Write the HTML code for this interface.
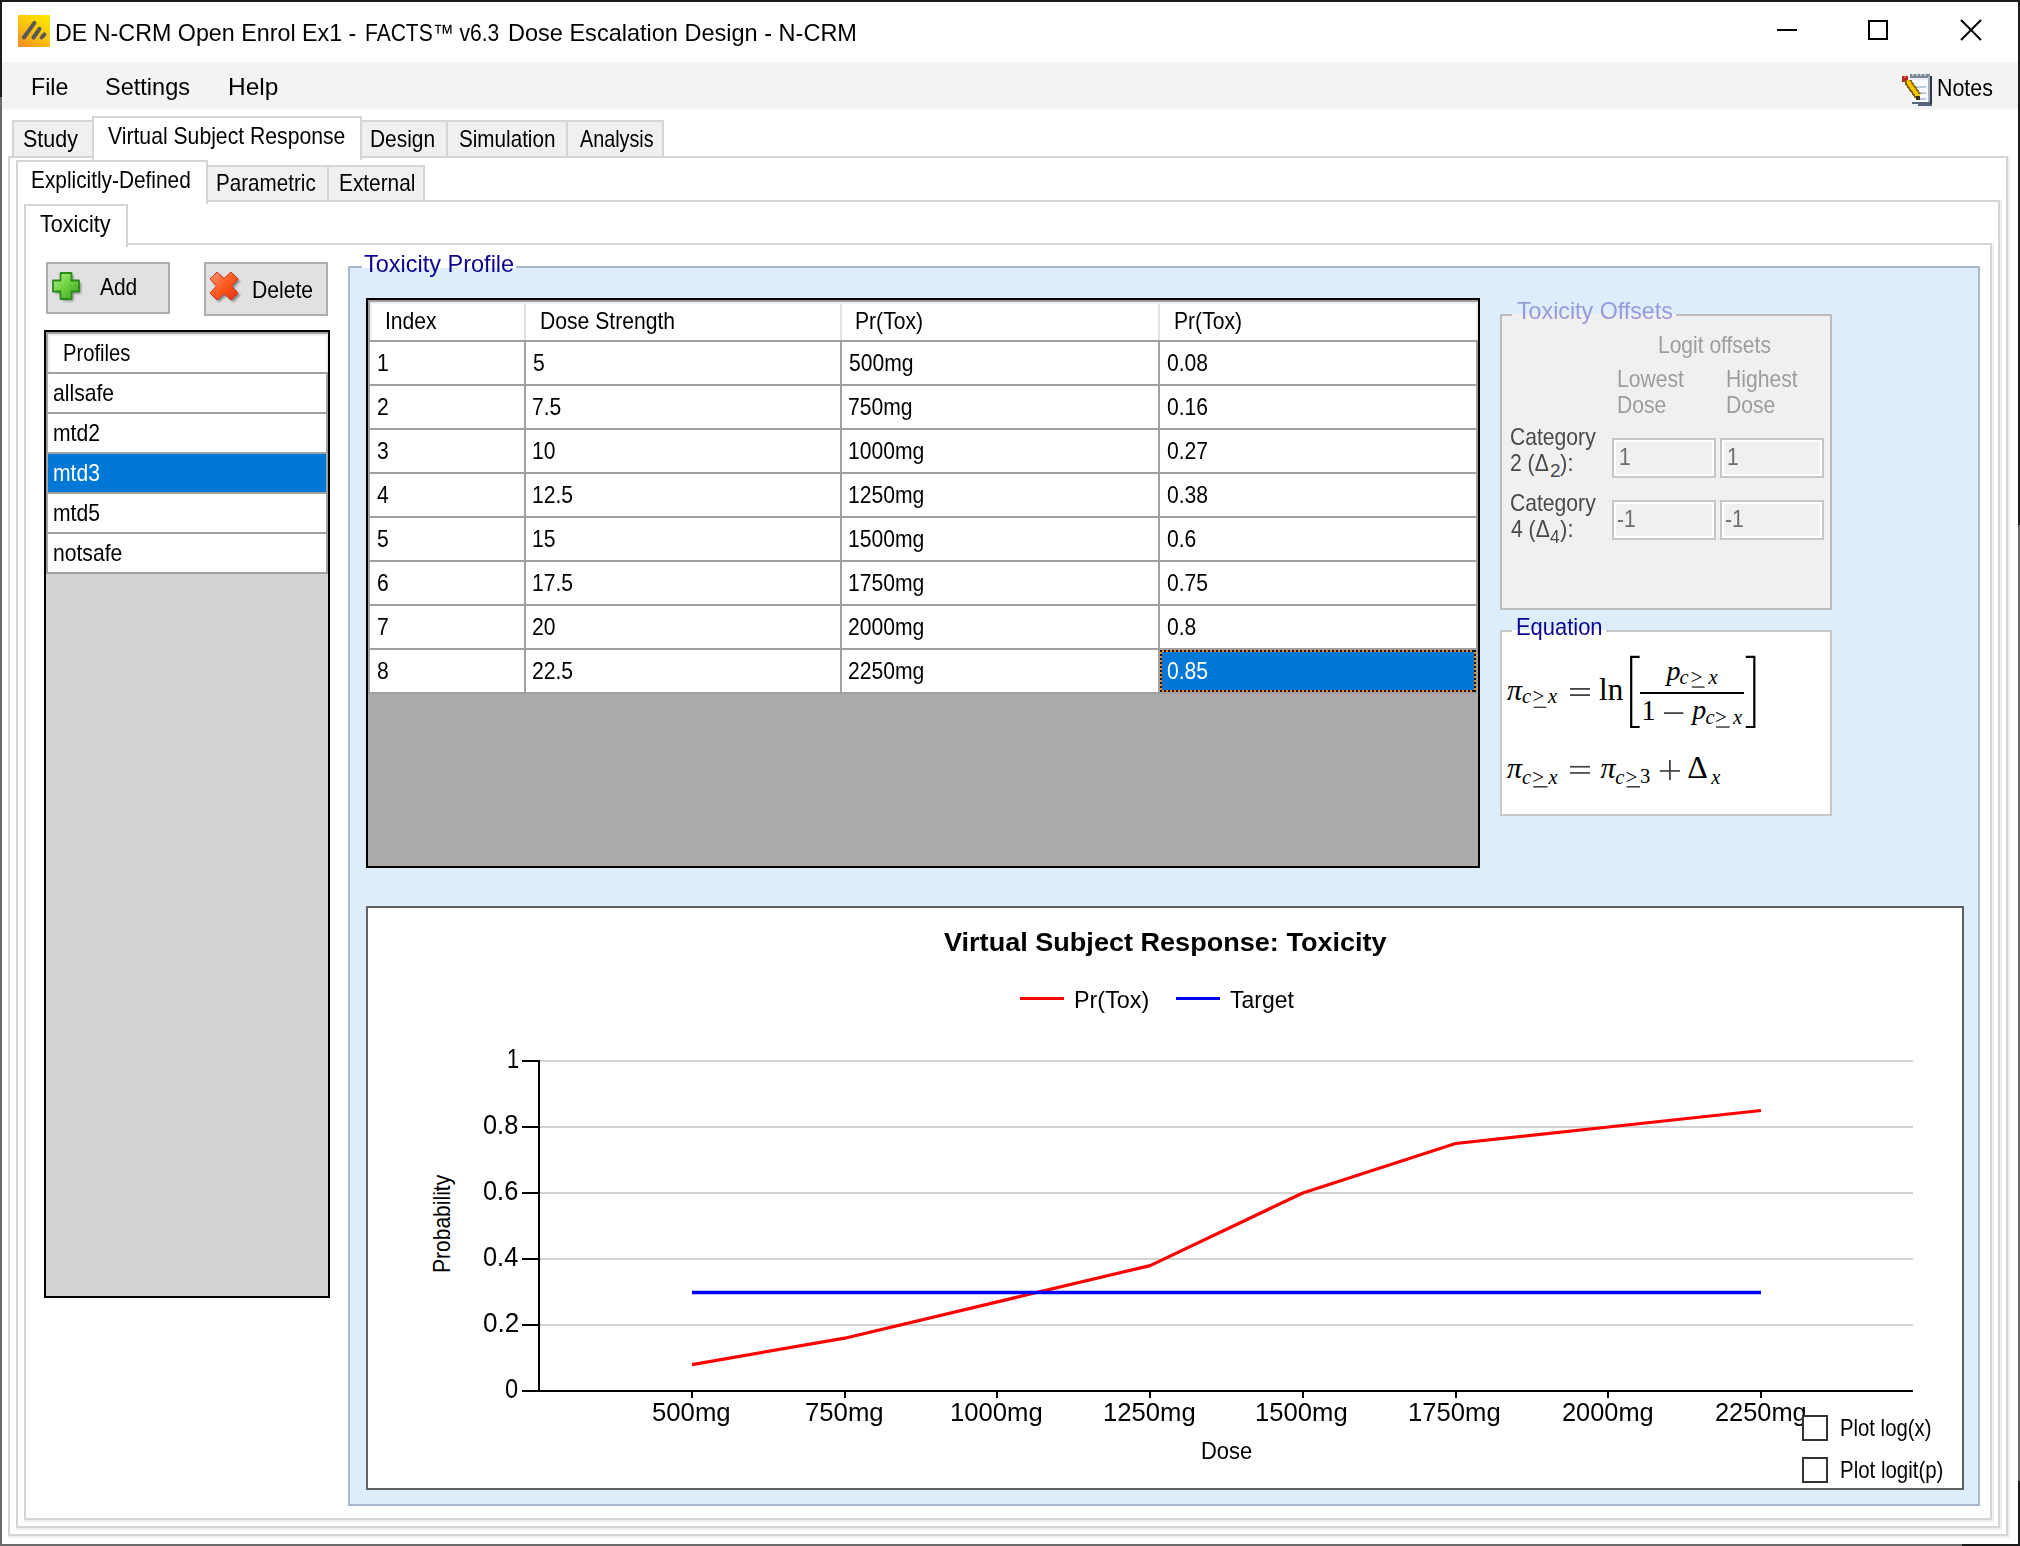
<!DOCTYPE html>
<html><head><meta charset="utf-8"><style>
html,body{margin:0;padding:0;}
body{width:2020px;height:1546px;position:relative;overflow:hidden;background:#fff;font-family:"Liberation Sans",sans-serif;}
.a{position:absolute;}
.t{position:absolute;white-space:nowrap;line-height:1;transform-origin:0 0;}
svg{position:absolute;}
</style></head><body>
<div class="a" style="left:0px;top:0px;width:2020px;height:62px;background:#ffffff;"></div>
<div class="a" style="left:2px;top:62px;width:2016px;height:47px;background:#f3f3f3;"></div>
<div class="a" style="left:2px;top:109px;width:2016px;height:1px;background:#f7f9fc;"></div>
<svg style="left:18px;top:15px" width="32" height="32" viewBox="0 0 32 32">
<defs><linearGradient id="ig" x1="0.85" y1="0" x2="0.15" y2="1"><stop offset="0" stop-color="#ffe800"/><stop offset="0.55" stop-color="#f9c010"/><stop offset="1" stop-color="#f39020"/></linearGradient>
<filter id="ib" x="-30%" y="-30%" width="160%" height="160%"><feGaussianBlur stdDeviation="0.6"/></filter></defs>
<rect x="0" y="0" width="32" height="32" fill="url(#ig)"/>
<g stroke="#585858" stroke-width="4.0" stroke-linecap="round" fill="none" filter="url(#ib)">
<line x1="5.9" y1="22.5" x2="16.4" y2="7.8"/><line x1="15.5" y1="22.5" x2="21.5" y2="13.9"/><line x1="23.6" y1="22.5" x2="26.4" y2="19.4"/>
</g></svg>
<span class="t" style="left:55.03px;top:20.68px;font-size:24px;color:#000;transform:scaleX(0.9697);">DE N-CRM Open Enrol Ex1 -</span>
<span class="t" style="left:365.12px;top:20.68px;font-size:24px;color:#000;transform:scaleX(0.8755);">FACTS™ v6.3</span>
<span class="t" style="left:507.52px;top:20.68px;font-size:24px;color:#000;transform:scaleX(0.9799);">Dose Escalation Design - N-CRM</span>
<div class="a" style="left:1777px;top:29px;width:20px;height:2px;background:#000;"></div>
<div class="a" style="left:1868px;top:20px;width:20px;height:20px;box-sizing:border-box;border-top:2px solid #000;border-left:2px solid #000;border-right:2px solid #000;border-bottom:2px solid #000;"></div>
<svg style="left:1960px;top:19px" width="22" height="22" viewBox="0 0 22 22"><g stroke="#000" stroke-width="2"><line x1="1" y1="1" x2="21" y2="21"/><line x1="21" y1="1" x2="1" y2="21"/></g></svg>
<span class="t" style="left:31.04px;top:75.18px;font-size:24px;color:#000;transform:scaleX(0.9645);">File</span>
<span class="t" style="left:105.02px;top:75.18px;font-size:24px;color:#000;transform:scaleX(0.9799);">Settings</span>
<span class="t" style="left:227.98px;top:75.18px;font-size:24px;color:#000;transform:scaleX(1.0206);">Help</span>
<svg style="left:1900px;top:72px" width="36" height="36" viewBox="0 0 36 36" shape-rendering="crispEdges">
<rect x="10" y="4" width="20" height="30" fill="#eef2f8"/>
<rect x="12" y="8" width="16" height="24" fill="#f8fafd"/>
<rect x="10" y="2" width="20" height="4" fill="#7d8794"/>
<rect x="12" y="2" width="2" height="2" fill="#b8c0c8"/><rect x="16" y="2" width="2" height="2" fill="#b8c0c8"/><rect x="20" y="2" width="2" height="2" fill="#b8c0c8"/><rect x="24" y="2" width="2" height="2" fill="#b8c0c8"/>
<rect x="28" y="4" width="2" height="30" fill="#a9b2bc"/>
<rect x="30" y="4" width="2" height="30" fill="#2c3a48"/>
<rect x="12" y="30" width="18" height="2" fill="#53667a"/>
<rect x="18" y="32" width="14" height="2" fill="#53667a"/>
<g fill="#b9c9e0"><rect x="16" y="14" width="10" height="2"/><rect x="16" y="20" width="10" height="2"/><rect x="16" y="26" width="10" height="2"/></g>
<path d="M2 4 h6 v6 h-6 z" fill="#b02a20"/><rect x="4" y="4" width="2" height="2" fill="#ff5a48"/>
<path d="M6 8 L10 8 L20 22 L20 26 L16 26 L6 12 Z" fill="#f4c800"/>
<path d="M6 8 L6 12 L16 26" fill="none" stroke="#8a6400" stroke-width="2"/>
<path d="M10 8 L20 22" fill="none" stroke="#9a7000" stroke-width="2"/>
<path d="M16 24 h4 v4 h-4 z" fill="#3a3020"/>
</svg>
<span class="t" style="left:1937.11px;top:75.68px;font-size:24px;color:#000;transform:scaleX(0.8915);">Notes</span>
<div class="a" style="left:0px;top:0px;width:2020px;height:2px;background:#1b1b1b;"></div>
<div class="a" style="left:0px;top:0px;width:2px;height:97px;background:#1b1b1b;"></div>
<div class="a" style="left:0px;top:97px;width:2px;height:1449px;background:#6a6a6a;"></div>
<div class="a" style="left:2018px;top:0px;width:2px;height:525px;background:#1b1b1b;"></div>
<div class="a" style="left:2018px;top:525px;width:2px;height:956px;background:#6a6a6a;"></div>
<div class="a" style="left:2018px;top:1481px;width:2px;height:65px;background:#1b1b1b;"></div>
<div class="a" style="left:0px;top:1544px;width:1962px;height:2px;background:#6a6a6a;"></div>
<div class="a" style="left:1962px;top:1544px;width:58px;height:2px;background:#1b1b1b;"></div>
<div class="a" style="left:8px;top:156px;width:2000px;height:1380px;box-sizing:border-box;border-top:2px solid #d5d5d5;border-left:2px solid #d5d5d5;border-right:2px solid #d5d5d5;border-bottom:2px solid #d5d5d5;"></div>
<div class="a" style="left:2008px;top:156px;width:2px;height:1382px;background:#efefef;"></div>
<div class="a" style="left:8px;top:1536px;width:2002px;height:2px;background:#efefef;"></div>
<div class="a" style="left:12px;top:120px;width:82px;height:36px;box-sizing:border-box;border-top:2px solid #d5d5d5;border-left:2px solid #d5d5d5;border-right:2px solid #d5d5d5;background:#f0f0f0;"></div>
<div class="a" style="left:446px;top:120px;width:122px;height:36px;box-sizing:border-box;border-top:2px solid #d5d5d5;border-left:2px solid #d5d5d5;border-right:2px solid #d5d5d5;background:#f0f0f0;"></div>
<div class="a" style="left:566px;top:120px;width:98px;height:36px;box-sizing:border-box;border-top:2px solid #d5d5d5;border-left:2px solid #d5d5d5;border-right:2px solid #d5d5d5;background:#f0f0f0;"></div>
<div class="a" style="left:360px;top:120px;width:88px;height:36px;box-sizing:border-box;border-top:2px solid #d5d5d5;border-left:2px solid #d5d5d5;border-right:2px solid #d5d5d5;background:#f0f0f0;"></div>
<div class="a" style="left:92px;top:116px;width:270px;height:44px;box-sizing:border-box;border-top:2px solid #d5d5d5;border-left:2px solid #d5d5d5;border-right:2px solid #d5d5d5;background:#ffffff;"></div>
<span class="t" style="left:23.11px;top:127.38px;font-size:24px;color:#000;transform:scaleX(0.8945);">Study</span>
<span class="t" style="left:108.00px;top:123.68px;font-size:24px;color:#000;transform:scaleX(0.8820);">Virtual Subject Response</span>
<span class="t" style="left:370.13px;top:127.18px;font-size:24px;color:#000;transform:scaleX(0.8707);">Design</span>
<span class="t" style="left:459.14px;top:127.18px;font-size:24px;color:#000;transform:scaleX(0.8605);">Simulation</span>
<span class="t" style="left:580.40px;top:127.18px;font-size:24px;color:#000;transform:scaleX(0.8236);">Analysis</span>
<div class="a" style="left:16px;top:200px;width:1984px;height:1328px;box-sizing:border-box;border-top:2px solid #d5d5d5;border-left:2px solid #d5d5d5;border-right:2px solid #d5d5d5;border-bottom:2px solid #d5d5d5;"></div>
<div class="a" style="left:2000px;top:200px;width:2px;height:1330px;background:#efefef;"></div>
<div class="a" style="left:16px;top:1528px;width:1986px;height:2px;background:#efefef;"></div>
<div class="a" style="left:206px;top:165px;width:123px;height:35px;box-sizing:border-box;border-top:2px solid #d5d5d5;border-left:2px solid #d5d5d5;border-right:2px solid #d5d5d5;background:#f0f0f0;"></div>
<div class="a" style="left:327px;top:165px;width:98px;height:35px;box-sizing:border-box;border-top:2px solid #d5d5d5;border-left:2px solid #d5d5d5;border-right:2px solid #d5d5d5;background:#f0f0f0;"></div>
<div class="a" style="left:16px;top:160px;width:192px;height:44px;box-sizing:border-box;border-top:2px solid #d5d5d5;border-left:2px solid #d5d5d5;border-right:2px solid #d5d5d5;background:#ffffff;"></div>
<span class="t" style="left:31.43px;top:167.68px;font-size:24px;color:#000;transform:scaleX(0.8678);">Explicitly-Defined</span>
<span class="t" style="left:215.64px;top:171.18px;font-size:24px;color:#000;transform:scaleX(0.8598);">Parametric</span>
<span class="t" style="left:339.13px;top:171.18px;font-size:24px;color:#000;transform:scaleX(0.8680);">External</span>
<div class="a" style="left:24px;top:243px;width:1968px;height:1277px;box-sizing:border-box;border-top:2px solid #d5d5d5;border-left:2px solid #d5d5d5;border-right:2px solid #d5d5d5;border-bottom:2px solid #d5d5d5;"></div>
<div class="a" style="left:1992px;top:243px;width:2px;height:1279px;background:#efefef;"></div>
<div class="a" style="left:24px;top:1520px;width:1970px;height:2px;background:#efefef;"></div>
<div class="a" style="left:24px;top:204px;width:104px;height:43px;box-sizing:border-box;border-top:2px solid #d5d5d5;border-left:2px solid #d5d5d5;border-right:2px solid #d5d5d5;background:#ffffff;"></div>
<span class="t" style="left:40.40px;top:211.68px;font-size:24px;color:#000;transform:scaleX(0.8973);">Toxicity</span>
<div class="a" style="left:46px;top:262px;width:124px;height:52px;box-sizing:border-box;border-top:2px solid #adadad;border-left:2px solid #adadad;border-right:2px solid #adadad;border-bottom:2px solid #adadad;background:#e1e1e1;"></div>
<div class="a" style="left:204px;top:262px;width:124px;height:54px;box-sizing:border-box;border-top:2px solid #adadad;border-left:2px solid #adadad;border-right:2px solid #adadad;border-bottom:2px solid #adadad;background:#e1e1e1;"></div>
<svg style="left:50px;top:270px" width="36" height="36" viewBox="0 0 36 36">
<path d="M10.5 3 h11 v7.5 h7.5 v11 h-7.5 v7.5 h-11 v-7.5 h-7.5 v-11 h7.5 z" transform="translate(2.2,2.2)" fill="#000" opacity="0.35" filter="url(#bl)"/>
<defs><filter id="bl" x="-20%" y="-20%" width="140%" height="140%"><feGaussianBlur stdDeviation="1.2"/></filter>
<linearGradient id="gg" x1="0" y1="0" x2="1" y2="1"><stop offset="0" stop-color="#b8f090"/><stop offset="0.5" stop-color="#6cd040"/><stop offset="1" stop-color="#3aa020"/></linearGradient></defs>
<path d="M10.5 3 h11 v7.5 h7.5 v11 h-7.5 v7.5 h-11 v-7.5 h-7.5 v-11 h7.5 z" fill="url(#gg)" stroke="#2a8a1a" stroke-width="1.8" stroke-linejoin="round"/>
</svg>
<svg style="left:206px;top:268px" width="40" height="40" viewBox="0 0 40 40">
<defs><filter id="bl2" x="-20%" y="-20%" width="140%" height="140%"><feGaussianBlur stdDeviation="1.3"/></filter>
<linearGradient id="rg" x1="0" y1="0" x2="1" y2="1"><stop offset="0" stop-color="#ff9a70"/><stop offset="0.5" stop-color="#ff5a20"/><stop offset="1" stop-color="#e83010"/></linearGradient></defs>
<path d="M4 11 L11 4 L18 10.5 L25 4 L32 11 L25.5 18 L32 25 L25 32 L18 25.5 L11 32 L4 25 L10.5 18 Z" transform="translate(2.2,2.2)" fill="#000" opacity="0.4" filter="url(#bl2)"/>
<path d="M4 11 L11 4 L18 10.5 L25 4 L32 11 L25.5 18 L32 25 L25 32 L18 25.5 L11 32 L4 25 L10.5 18 Z" fill="url(#rg)" stroke="#d03010" stroke-width="1" stroke-linejoin="round"/>
</svg>
<span class="t" style="left:99.80px;top:275.38px;font-size:24px;color:#000;transform:scaleX(0.8729);">Add</span>
<span class="t" style="left:251.62px;top:277.68px;font-size:24px;color:#000;transform:scaleX(0.8805);">Delete</span>
<div class="a" style="left:44px;top:330px;width:286px;height:968px;box-sizing:border-box;border-top:2px solid #000;border-left:2px solid #000;border-right:2px solid #000;border-bottom:2px solid #000;background:#d3d3d3;"></div>
<div class="a" style="left:46px;top:332px;width:282px;height:40px;background:#ffffff;"></div>
<div class="a" style="left:46px;top:332px;width:282px;height:2px;background:#a0a0a0;"></div>
<div class="a" style="left:46px;top:332px;width:2px;height:42px;background:#a0a0a0;"></div>
<div class="a" style="left:48px;top:334px;width:278px;height:2px;background:#f0f0f0;"></div>
<div class="a" style="left:48px;top:334px;width:2px;height:38px;background:#f0f0f0;"></div>
<div class="a" style="left:326px;top:334px;width:2px;height:38px;background:#ececec;"></div>
<div class="a" style="left:46px;top:372px;width:282px;height:2px;background:#a0a0a0;"></div>
<span class="t" style="left:63.16px;top:341.38px;font-size:24px;color:#000;transform:scaleX(0.8415);">Profiles</span>
<div class="a" style="left:46px;top:374px;width:282px;height:38px;background:#ffffff;"></div>
<div class="a" style="left:46px;top:374px;width:2px;height:40px;background:#a0a0a0;"></div>
<div class="a" style="left:326px;top:374px;width:2px;height:40px;background:#a0a0a0;"></div>
<div class="a" style="left:46px;top:412px;width:282px;height:2px;background:#a0a0a0;"></div>
<span class="t" style="left:52.62px;top:381.18px;font-size:24px;color:#000;transform:scaleX(0.8800);">allsafe</span>
<div class="a" style="left:46px;top:414px;width:282px;height:38px;background:#ffffff;"></div>
<div class="a" style="left:46px;top:414px;width:2px;height:40px;background:#a0a0a0;"></div>
<div class="a" style="left:326px;top:414px;width:2px;height:40px;background:#a0a0a0;"></div>
<div class="a" style="left:46px;top:452px;width:282px;height:2px;background:#a0a0a0;"></div>
<span class="t" style="left:52.62px;top:421.18px;font-size:24px;color:#000;transform:scaleX(0.8800);">mtd2</span>
<div class="a" style="left:46px;top:454px;width:282px;height:38px;background:#0078d7;"></div>
<div class="a" style="left:46px;top:454px;width:2px;height:40px;background:#a0a0a0;"></div>
<div class="a" style="left:326px;top:454px;width:2px;height:40px;background:#a0a0a0;"></div>
<div class="a" style="left:46px;top:492px;width:282px;height:2px;background:#a0a0a0;"></div>
<span class="t" style="left:52.62px;top:461.18px;font-size:24px;color:#fff;transform:scaleX(0.8800);">mtd3</span>
<div class="a" style="left:46px;top:494px;width:282px;height:38px;background:#ffffff;"></div>
<div class="a" style="left:46px;top:494px;width:2px;height:40px;background:#a0a0a0;"></div>
<div class="a" style="left:326px;top:494px;width:2px;height:40px;background:#a0a0a0;"></div>
<div class="a" style="left:46px;top:532px;width:282px;height:2px;background:#a0a0a0;"></div>
<span class="t" style="left:52.62px;top:501.18px;font-size:24px;color:#000;transform:scaleX(0.8800);">mtd5</span>
<div class="a" style="left:46px;top:534px;width:282px;height:38px;background:#ffffff;"></div>
<div class="a" style="left:46px;top:534px;width:2px;height:40px;background:#a0a0a0;"></div>
<div class="a" style="left:326px;top:534px;width:2px;height:40px;background:#a0a0a0;"></div>
<div class="a" style="left:46px;top:572px;width:282px;height:2px;background:#a0a0a0;"></div>
<span class="t" style="left:52.62px;top:541.18px;font-size:24px;color:#000;transform:scaleX(0.8800);">notsafe</span>
<div class="a" style="left:348px;top:266px;width:1632px;height:1240px;box-sizing:border-box;border-top:2px solid #a9b9cb;border-left:2px solid #a9b9cb;border-right:2px solid #a9b9cb;border-bottom:2px solid #a9b9cb;background:#deedfc;"></div>
<div class="a" style="left:362px;top:262px;width:154px;height:6px;background:#ffffff;"></div>
<div class="a" style="left:362px;top:268px;width:154px;height:2px;background:#deedfc;"></div>
<span class="t" style="left:364.00px;top:251.68px;font-size:24px;color:#0d0590;transform:scaleX(0.9789);">Toxicity Profile</span>
<div class="a" style="left:366px;top:298px;width:1114px;height:570px;box-sizing:border-box;border-top:2px solid #000;border-left:2px solid #000;border-right:2px solid #000;border-bottom:2px solid #000;background:#ababab;"></div>
<div class="a" style="left:368px;top:300px;width:1110px;height:42px;background:#ffffff;"></div>
<div class="a" style="left:368px;top:300px;width:1110px;height:2px;background:#a0a0a0;"></div>
<div class="a" style="left:368px;top:300px;width:2px;height:394px;background:#a0a0a0;"></div>
<div class="a" style="left:370px;top:302px;width:1106px;height:2px;background:#f0f0f0;"></div>
<div class="a" style="left:370px;top:302px;width:2px;height:38px;background:#f0f0f0;"></div>
<div class="a" style="left:1476px;top:302px;width:2px;height:38px;background:#ececec;"></div>
<div class="a" style="left:368px;top:340px;width:1110px;height:2px;background:#a0a0a0;"></div>
<div class="a" style="left:524px;top:304px;width:2px;height:36px;background:#e3e3e3;"></div>
<div class="a" style="left:840px;top:304px;width:2px;height:36px;background:#e3e3e3;"></div>
<div class="a" style="left:1158px;top:304px;width:2px;height:36px;background:#e3e3e3;"></div>
<span class="t" style="left:384.94px;top:308.78px;font-size:24px;color:#000;transform:scaleX(0.8800);">Index</span>
<span class="t" style="left:539.62px;top:308.78px;font-size:24px;color:#000;transform:scaleX(0.8800);">Dose Strength</span>
<span class="t" style="left:855.42px;top:308.78px;font-size:24px;color:#000;transform:scaleX(0.8800);">Pr(Tox)</span>
<span class="t" style="left:1173.52px;top:308.78px;font-size:24px;color:#000;transform:scaleX(0.8800);">Pr(Tox)</span>
<div class="a" style="left:370px;top:342px;width:1108px;height:44px;background:#ffffff;"></div>
<div class="a" style="left:370px;top:384px;width:1108px;height:2px;background:#a0a0a0;"></div>
<div class="a" style="left:524px;top:342px;width:2px;height:44px;background:#a0a0a0;"></div>
<div class="a" style="left:840px;top:342px;width:2px;height:44px;background:#a0a0a0;"></div>
<div class="a" style="left:1158px;top:342px;width:2px;height:44px;background:#a0a0a0;"></div>
<div class="a" style="left:1476px;top:342px;width:2px;height:44px;background:#a0a0a0;"></div>
<span class="t" style="left:376.52px;top:351.18px;font-size:24px;color:#000;transform:scaleX(0.8800);">1</span>
<span class="t" style="left:532.50px;top:351.18px;font-size:24px;color:#000;transform:scaleX(0.8800);">5</span>
<span class="t" style="left:848.60px;top:351.18px;font-size:24px;color:#000;transform:scaleX(0.8800);">500mg</span>
<span class="t" style="left:1166.70px;top:351.18px;font-size:24px;color:#000;transform:scaleX(0.8800);">0.08</span>
<div class="a" style="left:370px;top:386px;width:1108px;height:44px;background:#ffffff;"></div>
<div class="a" style="left:370px;top:428px;width:1108px;height:2px;background:#a0a0a0;"></div>
<div class="a" style="left:524px;top:386px;width:2px;height:44px;background:#a0a0a0;"></div>
<div class="a" style="left:840px;top:386px;width:2px;height:44px;background:#a0a0a0;"></div>
<div class="a" style="left:1158px;top:386px;width:2px;height:44px;background:#a0a0a0;"></div>
<div class="a" style="left:1476px;top:386px;width:2px;height:44px;background:#a0a0a0;"></div>
<span class="t" style="left:376.52px;top:395.18px;font-size:24px;color:#000;transform:scaleX(0.8800);">2</span>
<span class="t" style="left:531.62px;top:395.18px;font-size:24px;color:#000;transform:scaleX(0.8800);">7.5</span>
<span class="t" style="left:847.72px;top:395.18px;font-size:24px;color:#000;transform:scaleX(0.8800);">750mg</span>
<span class="t" style="left:1166.70px;top:395.18px;font-size:24px;color:#000;transform:scaleX(0.8800);">0.16</span>
<div class="a" style="left:370px;top:430px;width:1108px;height:44px;background:#ffffff;"></div>
<div class="a" style="left:370px;top:472px;width:1108px;height:2px;background:#a0a0a0;"></div>
<div class="a" style="left:524px;top:430px;width:2px;height:44px;background:#a0a0a0;"></div>
<div class="a" style="left:840px;top:430px;width:2px;height:44px;background:#a0a0a0;"></div>
<div class="a" style="left:1158px;top:430px;width:2px;height:44px;background:#a0a0a0;"></div>
<div class="a" style="left:1476px;top:430px;width:2px;height:44px;background:#a0a0a0;"></div>
<span class="t" style="left:377.40px;top:439.18px;font-size:24px;color:#000;transform:scaleX(0.8800);">3</span>
<span class="t" style="left:531.62px;top:439.18px;font-size:24px;color:#000;transform:scaleX(0.8800);">10</span>
<span class="t" style="left:847.72px;top:439.18px;font-size:24px;color:#000;transform:scaleX(0.8800);">1000mg</span>
<span class="t" style="left:1166.70px;top:439.18px;font-size:24px;color:#000;transform:scaleX(0.8800);">0.27</span>
<div class="a" style="left:370px;top:474px;width:1108px;height:44px;background:#ffffff;"></div>
<div class="a" style="left:370px;top:516px;width:1108px;height:2px;background:#a0a0a0;"></div>
<div class="a" style="left:524px;top:474px;width:2px;height:44px;background:#a0a0a0;"></div>
<div class="a" style="left:840px;top:474px;width:2px;height:44px;background:#a0a0a0;"></div>
<div class="a" style="left:1158px;top:474px;width:2px;height:44px;background:#a0a0a0;"></div>
<div class="a" style="left:1476px;top:474px;width:2px;height:44px;background:#a0a0a0;"></div>
<span class="t" style="left:377.40px;top:483.18px;font-size:24px;color:#000;transform:scaleX(0.8800);">4</span>
<span class="t" style="left:531.62px;top:483.18px;font-size:24px;color:#000;transform:scaleX(0.8800);">12.5</span>
<span class="t" style="left:847.72px;top:483.18px;font-size:24px;color:#000;transform:scaleX(0.8800);">1250mg</span>
<span class="t" style="left:1166.70px;top:483.18px;font-size:24px;color:#000;transform:scaleX(0.8800);">0.38</span>
<div class="a" style="left:370px;top:518px;width:1108px;height:44px;background:#ffffff;"></div>
<div class="a" style="left:370px;top:560px;width:1108px;height:2px;background:#a0a0a0;"></div>
<div class="a" style="left:524px;top:518px;width:2px;height:44px;background:#a0a0a0;"></div>
<div class="a" style="left:840px;top:518px;width:2px;height:44px;background:#a0a0a0;"></div>
<div class="a" style="left:1158px;top:518px;width:2px;height:44px;background:#a0a0a0;"></div>
<div class="a" style="left:1476px;top:518px;width:2px;height:44px;background:#a0a0a0;"></div>
<span class="t" style="left:377.40px;top:527.18px;font-size:24px;color:#000;transform:scaleX(0.8800);">5</span>
<span class="t" style="left:531.62px;top:527.18px;font-size:24px;color:#000;transform:scaleX(0.8800);">15</span>
<span class="t" style="left:847.72px;top:527.18px;font-size:24px;color:#000;transform:scaleX(0.8800);">1500mg</span>
<span class="t" style="left:1166.70px;top:527.18px;font-size:24px;color:#000;transform:scaleX(0.8800);">0.6</span>
<div class="a" style="left:370px;top:562px;width:1108px;height:44px;background:#ffffff;"></div>
<div class="a" style="left:370px;top:604px;width:1108px;height:2px;background:#a0a0a0;"></div>
<div class="a" style="left:524px;top:562px;width:2px;height:44px;background:#a0a0a0;"></div>
<div class="a" style="left:840px;top:562px;width:2px;height:44px;background:#a0a0a0;"></div>
<div class="a" style="left:1158px;top:562px;width:2px;height:44px;background:#a0a0a0;"></div>
<div class="a" style="left:1476px;top:562px;width:2px;height:44px;background:#a0a0a0;"></div>
<span class="t" style="left:376.52px;top:571.18px;font-size:24px;color:#000;transform:scaleX(0.8800);">6</span>
<span class="t" style="left:531.62px;top:571.18px;font-size:24px;color:#000;transform:scaleX(0.8800);">17.5</span>
<span class="t" style="left:847.72px;top:571.18px;font-size:24px;color:#000;transform:scaleX(0.8800);">1750mg</span>
<span class="t" style="left:1166.70px;top:571.18px;font-size:24px;color:#000;transform:scaleX(0.8800);">0.75</span>
<div class="a" style="left:370px;top:606px;width:1108px;height:44px;background:#ffffff;"></div>
<div class="a" style="left:370px;top:648px;width:1108px;height:2px;background:#a0a0a0;"></div>
<div class="a" style="left:524px;top:606px;width:2px;height:44px;background:#a0a0a0;"></div>
<div class="a" style="left:840px;top:606px;width:2px;height:44px;background:#a0a0a0;"></div>
<div class="a" style="left:1158px;top:606px;width:2px;height:44px;background:#a0a0a0;"></div>
<div class="a" style="left:1476px;top:606px;width:2px;height:44px;background:#a0a0a0;"></div>
<span class="t" style="left:376.52px;top:615.18px;font-size:24px;color:#000;transform:scaleX(0.8800);">7</span>
<span class="t" style="left:531.62px;top:615.18px;font-size:24px;color:#000;transform:scaleX(0.8800);">20</span>
<span class="t" style="left:847.72px;top:615.18px;font-size:24px;color:#000;transform:scaleX(0.8800);">2000mg</span>
<span class="t" style="left:1166.70px;top:615.18px;font-size:24px;color:#000;transform:scaleX(0.8800);">0.8</span>
<div class="a" style="left:370px;top:650px;width:1108px;height:44px;background:#ffffff;"></div>
<div class="a" style="left:370px;top:692px;width:1108px;height:2px;background:#a0a0a0;"></div>
<div class="a" style="left:524px;top:650px;width:2px;height:44px;background:#a0a0a0;"></div>
<div class="a" style="left:840px;top:650px;width:2px;height:44px;background:#a0a0a0;"></div>
<div class="a" style="left:1158px;top:650px;width:2px;height:44px;background:#a0a0a0;"></div>
<div class="a" style="left:1476px;top:650px;width:2px;height:44px;background:#a0a0a0;"></div>
<span class="t" style="left:376.52px;top:659.18px;font-size:24px;color:#000;transform:scaleX(0.8800);">8</span>
<span class="t" style="left:531.62px;top:659.18px;font-size:24px;color:#000;transform:scaleX(0.8800);">22.5</span>
<span class="t" style="left:847.72px;top:659.18px;font-size:24px;color:#000;transform:scaleX(0.8800);">2250mg</span>
<div class="a" style="left:1160px;top:650px;width:316px;height:42px;background:#0078d7;"></div>
<div class="a" style="left:1160px;top:650px;width:316px;height:2px;background:repeating-linear-gradient(90deg,#111 0 2px,#f08a20 2px 4px);"></div>
<div class="a" style="left:1160px;top:690px;width:316px;height:2px;background:repeating-linear-gradient(90deg,#111 0 2px,#f08a20 2px 4px);"></div>
<div class="a" style="left:1160px;top:650px;width:2px;height:42px;background:repeating-linear-gradient(180deg,#111 0 2px,#f08a20 2px 4px);"></div>
<div class="a" style="left:1474px;top:650px;width:2px;height:42px;background:repeating-linear-gradient(180deg,#111 0 2px,#f08a20 2px 4px);"></div>
<span class="t" style="left:1166.70px;top:659.18px;font-size:24px;color:#fff;transform:scaleX(0.8800);">0.85</span>
<div class="a" style="left:1500px;top:314px;width:332px;height:296px;box-sizing:border-box;border-top:2px solid #bdbdbd;border-left:2px solid #bdbdbd;border-right:2px solid #bdbdbd;border-bottom:2px solid #bdbdbd;background:#f0f0f0;"></div>
<div class="a" style="left:1512px;top:300px;width:164px;height:14px;background:#deedfc;"></div>
<div class="a" style="left:1512px;top:314px;width:164px;height:2px;background:#f0f0f0;"></div>
<span class="t" style="left:1516.70px;top:299.08px;font-size:24px;color:#9a9ad6;transform:scaleX(0.9681);">Toxicity Offsets</span>
<span class="t" style="left:1657.72px;top:333.28px;font-size:24px;color:#9d9d9d;transform:scaleX(0.8752);">Logit offsets</span>
<span class="t" style="left:1617.12px;top:367.38px;font-size:24px;color:#9d9d9d;transform:scaleX(0.8800);">Lowest</span>
<span class="t" style="left:1617.12px;top:392.98px;font-size:24px;color:#9d9d9d;transform:scaleX(0.8800);">Dose</span>
<span class="t" style="left:1726.12px;top:367.38px;font-size:24px;color:#9d9d9d;transform:scaleX(0.8800);">Highest</span>
<span class="t" style="left:1726.12px;top:392.98px;font-size:24px;color:#9d9d9d;transform:scaleX(0.8800);">Dose</span>
<span class="t" style="left:1510.42px;top:425.48px;font-size:24px;color:#4a4a4a;transform:scaleX(0.8800);">Category</span>
<span class="t" style="left:1510.42px;top:491.18px;font-size:24px;color:#4a4a4a;transform:scaleX(0.8800);">Category</span>
<span class="t" style="left:1510.42px;top:451.08px;font-size:24px;color:#4a4a4a;transform:scaleX(0.8800);">2 (Δ</span>
<span class="t" style="left:1511.30px;top:517.18px;font-size:24px;color:#4a4a4a;transform:scaleX(0.8800);">4 (Δ</span>
<div class="a" style="left:1612px;top:438px;width:104px;height:40px;box-sizing:border-box;border-top:2px solid #c6c6c6;border-left:2px solid #c6c6c6;border-right:2px solid #c6c6c6;border-bottom:2px solid #c6c6c6;background:#f0f0f0;"></div>
<div class="a" style="left:1614px;top:440px;width:100px;height:36px;box-sizing:border-box;border-top:2px solid #ffffff;border-left:2px solid #ffffff;border-right:2px solid #ffffff;border-bottom:2px solid #ffffff;"></div>
<div class="a" style="left:1720px;top:438px;width:104px;height:40px;box-sizing:border-box;border-top:2px solid #c6c6c6;border-left:2px solid #c6c6c6;border-right:2px solid #c6c6c6;border-bottom:2px solid #c6c6c6;background:#f0f0f0;"></div>
<div class="a" style="left:1722px;top:440px;width:100px;height:36px;box-sizing:border-box;border-top:2px solid #ffffff;border-left:2px solid #ffffff;border-right:2px solid #ffffff;border-bottom:2px solid #ffffff;"></div>
<div class="a" style="left:1612px;top:500px;width:104px;height:40px;box-sizing:border-box;border-top:2px solid #c6c6c6;border-left:2px solid #c6c6c6;border-right:2px solid #c6c6c6;border-bottom:2px solid #c6c6c6;background:#f0f0f0;"></div>
<div class="a" style="left:1614px;top:502px;width:100px;height:36px;box-sizing:border-box;border-top:2px solid #ffffff;border-left:2px solid #ffffff;border-right:2px solid #ffffff;border-bottom:2px solid #ffffff;"></div>
<div class="a" style="left:1720px;top:500px;width:104px;height:40px;box-sizing:border-box;border-top:2px solid #c6c6c6;border-left:2px solid #c6c6c6;border-right:2px solid #c6c6c6;border-bottom:2px solid #c6c6c6;background:#f0f0f0;"></div>
<div class="a" style="left:1722px;top:502px;width:100px;height:36px;box-sizing:border-box;border-top:2px solid #ffffff;border-left:2px solid #ffffff;border-right:2px solid #ffffff;border-bottom:2px solid #ffffff;"></div>
<span class="t" style="left:1619.32px;top:445.08px;font-size:24px;color:#6d6d6d;transform:scaleX(0.8800);">1</span>
<span class="t" style="left:1727.12px;top:445.08px;font-size:24px;color:#6d6d6d;transform:scaleX(0.8800);">1</span>
<span class="t" style="left:1617.12px;top:507.08px;font-size:24px;color:#6d6d6d;transform:scaleX(0.8800);">-1</span>
<span class="t" style="left:1725.12px;top:507.08px;font-size:24px;color:#6d6d6d;transform:scaleX(0.8800);">-1</span>
<div class="a" style="left:1500px;top:630px;width:332px;height:186px;box-sizing:border-box;border-top:2px solid #c8c8c8;border-left:2px solid #c8c8c8;border-right:2px solid #c8c8c8;border-bottom:2px solid #c8c8c8;background:#ffffff;"></div>
<div class="a" style="left:1512px;top:616px;width:94px;height:14px;background:#deedfc;"></div>
<div class="a" style="left:1512px;top:630px;width:94px;height:2px;background:#ffffff;"></div>
<span class="t" style="left:1516.09px;top:615.28px;font-size:24px;color:#0d0590;transform:scaleX(0.9134);">Equation</span>
<span class="t" style="left:1550.00px;top:461.41px;font-size:19px;color:#4a4a4a;">2</span>
<span class="t" style="left:1559.80px;top:451.48px;font-size:24px;color:#4a4a4a;transform:scaleX(0.9236);">):</span>
<span class="t" style="left:1550.00px;top:527.41px;font-size:19px;color:#4a4a4a;transform:scaleX(0.9091);">4</span>
<span class="t" style="left:1559.80px;top:517.48px;font-size:24px;color:#4a4a4a;transform:scaleX(0.9236);">):</span>
<svg style="left:0;top:0" width="2020" height="1546" viewBox="0 0 2020 1546"><g font-family="Liberation Serif" fill="#000"><text x="1507" y="699.5" font-size="30" font-style="italic">π</text><text x="1521.9" y="703.4" font-size="20.5" font-style="italic">c</text><text x="1532.6" y="703.4" font-size="21" >&gt;</text><text x="1548" y="703.4" font-size="20.5" font-style="italic">x</text><text x="1599.1" y="699.5" font-size="31" >ln</text><text x="1666.4" y="679.5" font-size="28" font-style="italic">p</text><text x="1679.4" y="683.5" font-size="20.5" font-style="italic">c</text><text x="1690.8" y="683.5" font-size="21" >&gt;</text><text x="1708.5" y="683.5" font-size="20.5" font-style="italic">x</text><text x="1641.2" y="719.5" font-size="29" >1</text><text x="1692.2" y="719.4" font-size="28" font-style="italic">p</text><text x="1705.4" y="724" font-size="20.5" font-style="italic">c</text><text x="1715" y="724" font-size="21" >&gt;</text><text x="1733" y="724" font-size="20.5" font-style="italic">x</text><text x="1507" y="777.7" font-size="30" font-style="italic">π</text><text x="1522" y="783.6" font-size="20.5" font-style="italic">c</text><text x="1532.3" y="783.6" font-size="21" >&gt;</text><text x="1548.5" y="783.6" font-size="20.5" font-style="italic">x</text><text x="1600.4" y="777.7" font-size="30" font-style="italic">π</text><text x="1615.2" y="783.6" font-size="20.5" font-style="italic">c</text><text x="1625.5" y="783.6" font-size="21" >&gt;</text><text x="1640" y="783.2" font-size="20.6" >3</text><text x="1687.3" y="777.7" font-size="32" >Δ</text><text x="1711.3" y="783.6" font-size="20.5" font-style="italic">x</text></g><rect x="1533.7" y="706.6" width="12.6" height="1.4" fill="#444"/><rect x="1691.8" y="686.3" width="12.8" height="1.5" fill="#444"/><rect x="1716" y="726.3" width="13.7" height="1.5" fill="#444"/><rect x="1533.3" y="786.0" width="14.2" height="1.6" fill="#444"/><rect x="1626.5" y="786.0" width="13.5" height="1.6" fill="#444"/><rect x="1570" y="688.0" width="20.0" height="1.8" fill="#444"/><rect x="1570" y="694.2" width="20.0" height="1.8" fill="#444"/><rect x="1570" y="765.9" width="20.0" height="1.7" fill="#444"/><rect x="1570" y="772.1" width="20.0" height="1.7" fill="#444"/><rect x="1664" y="712.2" width="19.4" height="1.8" fill="#444"/><rect x="1659.8" y="770.1" width="20.2" height="1.7" fill="#444"/><rect x="1669.0" y="760" width="1.8" height="20.0" fill="#444"/><rect x="1640" y="692" width="104" height="2" fill="#000"/><path d="M1639.6 656.8 H1631.2 V727 H1639.6" fill="none" stroke="#000" stroke-width="2.2"/><path d="M1745.8 656.8 H1754.3 V727 H1745.8" fill="none" stroke="#000" stroke-width="2.2"/></svg>
<div class="a" style="left:366px;top:906px;width:1598px;height:584px;box-sizing:border-box;border-top:2px solid #606060;border-left:2px solid #606060;border-right:2px solid #606060;border-bottom:2px solid #606060;background:#ffffff;"></div>
<span class="t" style="left:944.00px;top:929.39px;font-size:26px;color:#000;font-weight:bold;transform:scaleX(1.0409);">Virtual Subject Response: Toxicity</span>
<div class="a" style="left:1020px;top:997px;width:44px;height:3px;background:#ff0000;"></div>
<span class="t" style="left:1074.43px;top:987.68px;font-size:24px;color:#000;transform:scaleX(0.9729);">Pr(Tox)</span>
<div class="a" style="left:1176px;top:997px;width:44px;height:3px;background:#0000ff;"></div>
<span class="t" style="left:1230.00px;top:987.68px;font-size:24px;color:#000;transform:scaleX(0.9562);">Target</span>
<div class="a" style="left:540px;top:1060px;width:1373px;height:2px;background:#d3d3d3;"></div>
<div class="a" style="left:540px;top:1126px;width:1373px;height:2px;background:#d3d3d3;"></div>
<div class="a" style="left:540px;top:1192px;width:1373px;height:2px;background:#d3d3d3;"></div>
<div class="a" style="left:540px;top:1258px;width:1373px;height:2px;background:#d3d3d3;"></div>
<div class="a" style="left:540px;top:1324px;width:1373px;height:2px;background:#d3d3d3;"></div>
<div class="a" style="left:522px;top:1060px;width:18px;height:2px;background:#000;"></div>
<div class="a" style="left:522px;top:1126px;width:18px;height:2px;background:#000;"></div>
<div class="a" style="left:522px;top:1192px;width:18px;height:2px;background:#000;"></div>
<div class="a" style="left:522px;top:1258px;width:18px;height:2px;background:#000;"></div>
<div class="a" style="left:522px;top:1324px;width:18px;height:2px;background:#000;"></div>
<div class="a" style="left:522px;top:1390px;width:18px;height:2px;background:#000;"></div>
<div class="a" style="left:538px;top:1060px;width:2px;height:332px;background:#000;"></div>
<div class="a" style="left:538px;top:1390px;width:1375px;height:2px;background:#000;"></div>
<span class="t" style="left:506.72px;top:1045.02px;font-size:27.5px;color:#000;transform:scaleX(0.7917);">1</span>
<span class="t" style="left:482.78px;top:1111.02px;font-size:27.5px;color:#000;transform:scaleX(0.9233);">0.8</span>
<span class="t" style="left:482.78px;top:1177.02px;font-size:27.5px;color:#000;transform:scaleX(0.9233);">0.6</span>
<span class="t" style="left:482.78px;top:1243.02px;font-size:27.5px;color:#000;transform:scaleX(0.9233);">0.4</span>
<span class="t" style="left:482.75px;top:1309.02px;font-size:27.5px;color:#000;transform:scaleX(0.9489);">0.2</span>
<span class="t" style="left:504.94px;top:1375.02px;font-size:27.5px;color:#000;transform:scaleX(0.8571);">0</span>
<div class="a" style="left:691px;top:1392px;width:2px;height:6px;background:#000;"></div>
<span class="t" style="left:652.03px;top:1398.96px;font-size:26.5px;color:#000;transform:scaleX(0.9711);">500mg</span>
<div class="a" style="left:844px;top:1392px;width:2px;height:6px;background:#000;"></div>
<span class="t" style="left:804.74px;top:1398.96px;font-size:26.5px;color:#000;transform:scaleX(0.9711);">750mg</span>
<div class="a" style="left:996px;top:1392px;width:2px;height:6px;background:#000;"></div>
<span class="t" style="left:949.99px;top:1398.96px;font-size:26.5px;color:#000;transform:scaleX(0.9675);">1000mg</span>
<div class="a" style="left:1149px;top:1392px;width:2px;height:6px;background:#000;"></div>
<span class="t" style="left:1102.70px;top:1398.96px;font-size:26.5px;color:#000;transform:scaleX(0.9675);">1250mg</span>
<div class="a" style="left:1302px;top:1392px;width:2px;height:6px;background:#000;"></div>
<span class="t" style="left:1255.41px;top:1398.96px;font-size:26.5px;color:#000;transform:scaleX(0.9675);">1500mg</span>
<div class="a" style="left:1455px;top:1392px;width:2px;height:6px;background:#000;"></div>
<span class="t" style="left:1408.12px;top:1398.96px;font-size:26.5px;color:#000;transform:scaleX(0.9675);">1750mg</span>
<div class="a" style="left:1607px;top:1392px;width:2px;height:6px;background:#000;"></div>
<span class="t" style="left:1561.80px;top:1398.96px;font-size:26.5px;color:#000;transform:scaleX(0.9572);">2000mg</span>
<div class="a" style="left:1760px;top:1392px;width:2px;height:6px;background:#000;"></div>
<span class="t" style="left:1714.51px;top:1398.96px;font-size:26.5px;color:#000;transform:scaleX(0.9572);">2250mg</span>
<span class="t" style="left:1200.89px;top:1439.38px;font-size:24px;color:#000;transform:scaleX(0.9144);">Dose</span>
<span class="t" style="left:429.68px;top:1272.68px;font-size:24px;color:#000;transform:rotate(-90deg) scaleX(0.8760);">Probability</span>
<svg style="left:0;top:0" width="2020" height="1546" viewBox="0 0 2020 1546"><polyline points="692.0,1364.6 844.7,1338.2 997.4,1301.9 1150.1,1265.6 1302.8,1193.0 1455.6,1143.5 1608.3,1127.0 1761.0,1110.5" fill="none" stroke="#ff0000" stroke-width="3.2" stroke-linejoin="round"/><line x1="692.0" y1="1292.5" x2="1761.0" y2="1292.5" stroke="#0000ff" stroke-width="3.4"/></svg>
<div class="a" style="left:1802px;top:1415px;width:26px;height:26px;box-sizing:border-box;border-top:2px solid #333333;border-left:2px solid #333333;border-right:2px solid #333333;border-bottom:2px solid #333333;background:#ffffff;"></div>
<div class="a" style="left:1802px;top:1457px;width:26px;height:26px;box-sizing:border-box;border-top:2px solid #333333;border-left:2px solid #333333;border-right:2px solid #333333;border-bottom:2px solid #333333;background:#ffffff;"></div>
<span class="t" style="left:1840.45px;top:1415.68px;font-size:24px;color:#000;transform:scaleX(0.8459);">Plot log(x)</span>
<span class="t" style="left:1840.45px;top:1457.68px;font-size:24px;color:#000;transform:scaleX(0.8518);">Plot logit(p)</span>
</body></html>
